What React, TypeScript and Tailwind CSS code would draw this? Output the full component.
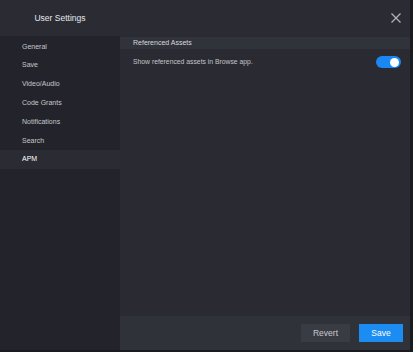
import React from 'react';

const items = ['General', 'Save', 'Video/Audio', 'Code Grants', 'Notifications', 'Search', 'APM'];

export default function App() {
  const active = 'APM';

  return (
    <div className="w-[413px] h-[352px] bg-[#1a1b20] font-['Liberation_Sans',Arial,sans-serif]">
      <div className="w-[410px] h-[350px] flex flex-col bg-[#2a2b32]">
        {/* Header */}
        <div className="h-[36px] flex items-center bg-[#2a2b33]">
          <div className="w-[120px] text-center text-[8.5px] text-[#e6e7ee]">User Settings</div>
          <div className="flex-1" />
          <button className="w-[12px] h-[12px] mr-[8px] flex items-center justify-center text-[#b4b5bc]">
            <svg width="10" height="10" viewBox="0 0 10 10" fill="none" stroke="currentColor" strokeWidth="1.2">
              <path d="M0.5 0.5 L9.5 9.5 M9.5 0.5 L0.5 9.5" />
            </svg>
          </button>
        </div>

        <div className="flex-1 flex min-h-0">
          {/* Sidebar */}
          <div className="w-[120px] bg-[#23242b] pt-[1.5px]">
            {items.map((item) => (
              <div
                key={item}
                className={`h-[18.8px] flex items-center pl-[22px] text-[7px] ${
                  item === active ? 'bg-[#2a2b33] text-white' : 'text-[#c5c6cc]'
                }`}
              >
                {item}
              </div>
            ))}
          </div>

          {/* Content */}
          <div className="flex-1 flex flex-col pt-[1px]">
            <div className="h-[12px] flex items-center pl-[13px] bg-[#31333a] text-[7px] text-[#d8d9de]">
              Referenced Assets
            </div>
            <div className="h-[26px] flex items-center pl-[13px] pr-[9px] text-[6.8px] text-[#c2c3c9]">
              <span className="flex-1">Show referenced assets in Browse app.</span>
              <div className="w-[25px] h-[12px] rounded-full bg-[#1a88f2] flex items-center justify-end pr-[2px]">
                <div className="w-[9px] h-[9px] rounded-full bg-white" />
              </div>
            </div>
            <div className="flex-1" />
            <div className="h-[34px] bg-[#30323a] flex items-center justify-end gap-[9px] pr-[7px]">
              <button className="w-[49px] h-[18px] bg-[#3a3c44] text-[8.5px] text-[#c9cad0]">Revert</button>
              <button className="w-[44px] h-[18px] bg-[#1a8cf2] text-[8.5px] text-white">Save</button>
            </div>
          </div>
        </div>
      </div>
    </div>
  );
}
